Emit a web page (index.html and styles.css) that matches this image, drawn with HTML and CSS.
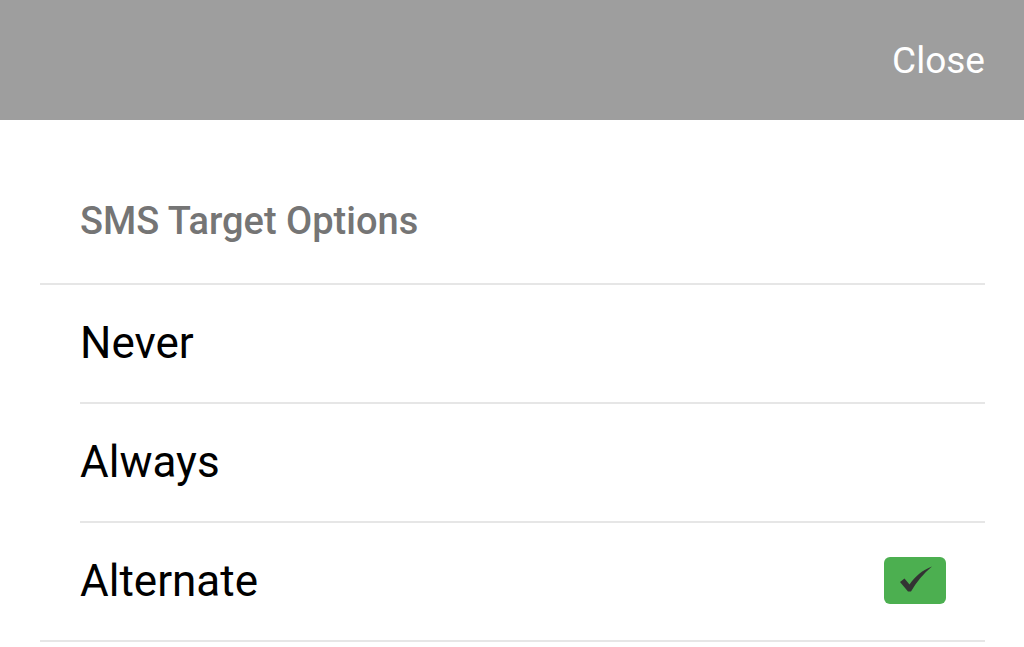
FILE: index.html
```html
<!DOCTYPE html>
<html lang="en">
<head>
  <meta charset="UTF-8" />
  <meta name="viewport" content="width=device-width, initial-scale=1.0"/>
  <title>SMS Target Options</title>
  <link rel="stylesheet" href="styles.css">
</head>
<body>

  <header class="topbar">
    <span class="close-button">Close</span>
  </header>

  <div class="options">
    <div class="options-title">SMS Target Options</div>
    <ul class="option-list">
      <li class="option">Never</li>
      <li class="option">Always</li>
      <li class="option selected">
        Alternate
        <span class="check-box">
          <svg width="62" height="47" viewBox="0 0 62 47">
            <path d="M16 25 L20.5 21.5 L25.5 27.5 C31 19.5 38.5 13 48 9.5 C39.5 16.5 32.5 25 27 34.5 L24 34.5 Z" fill="#333"/>
          </svg>
        </span>
      </li>
    </ul>
  </div>

</body>
</html>
```

FILE: styles.css
```css
body {
  font-family: Roboto, 'Noto Sans', sans-serif;
  background: white;
  color: black;
  margin: 0;
}

.topbar {
  height: 120px;
  background: #9e9e9e;
  display: flex;
  justify-content: flex-end;
  align-items: center;
  padding-right: 39px;
}

.close-button {
  color: white;
  font-size: 37px;
}

.options {
  margin: 0 39px 0 40px;
}

.options-title {
  height: 165px;
  display: flex;
  align-items: center;
  padding-left: 40px;
  padding-top: 38px;
  box-sizing: border-box;
  font-size: 38px;
  font-weight: 500;
  color: #757575;
  border-bottom: 2px solid #e6e6e6;
}

.option-list {
  list-style: none;
  margin: 0;
  padding: 0;
}

.option {
  height: 115px;
  margin-left: 40px;
  padding-bottom: 2px;
  display: flex;
  align-items: center;
  justify-content: space-between;
  padding-right: 39px;
  font-size: 44px;
  border-bottom: 2px solid #e6e6e6;
}

.option:last-child {
  margin-left: 0;
  padding-left: 40px;
}

.check-box {
  width: 62px;
  height: 47px;
  background: #4caf50;
  border-radius: 6px;
  display: flex;
}
```
